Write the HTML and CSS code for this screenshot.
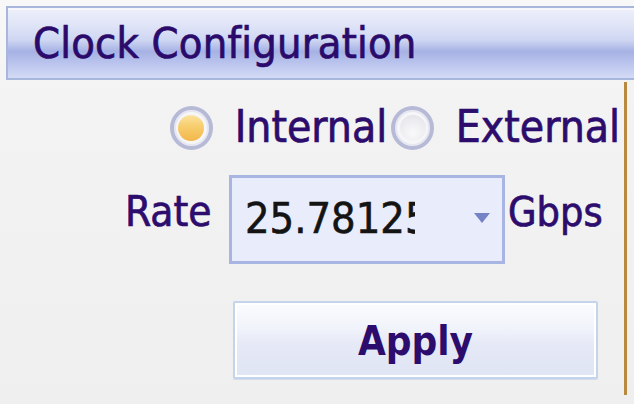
FILE: index.html
```html
<!DOCTYPE html>
<html>
<head>
<meta charset="utf-8">
<link rel="stylesheet" href="styles.css">
</head>
<body>
<div class="window">
  <div class="header"><span class="title">Clock Configuration</span></div>
  <div class="content">
    <div class="row radios">
      <span class="radio checked"><span class="dot"></span></span>
      <span class="label radio-label">Internal</span>
      <span class="radio"><span class="dot"></span></span>
      <span class="label radio-label">External</span>
    </div>
    <div class="row rate">
      <span class="label rate-label">Rate</span>
      <div class="combo">
        <span class="combo-text">25.78125</span>
        <svg class="combo-arrow" width="16" height="10" viewBox="0 0 16 10"><path d="M0 0 H16 L8 10 Z" fill="#7482c6"/></svg>
      </div>
      <span class="label unit-label">Gbps</span>
    </div>
    <div class="row actions">
      <button class="apply">Apply</button>
    </div>
  </div>
</div>
</body>
</html>
```
FILE: styles.css
```css
html, body {
  margin: 0;
  padding: 0;
}
body {
  width: 634px;
  height: 404px;
  overflow: hidden;
  background: linear-gradient(to bottom, #f8f8f8 0px, #f3f3f3 90px, #efefef 404px);
  font-family: "DejaVu Sans Condensed", "DejaVu Sans", sans-serif;
  font-stretch: condensed;
  color: #2c0c6c;
}
.window {
  display: flex;
  flex-direction: column;
}
.header {
  margin: 6px 0 0 6px;
  height: 70px;
  border: 2px solid #a7b6da;
  border-right: none;
  background: linear-gradient(to bottom, #eef0fa 0%, #dfe4f7 25%, #cfd6f2 46%, #a6b2e4 62%, #b9c3ed 78%, #d4dbf5 100%);
  display: flex;
  align-items: center;
  padding-left: 25px;
  box-shadow: inset 0 2px 0 #f6f7fd;
}
.title {
  font-size: 43px;
  color: #2a0a6a;
  -webkit-text-stroke: 0.7px #2a0a6a;
  letter-spacing: 0.2px;
}
.content {
  width: 624px;
  height: 313px;
  margin-top: 2px;
  border-right: 3px solid #b88a40;
  display: flex;
  flex-direction: column;
}
.row {
  display: flex;
}
.label {
  font-size: 43px;
  line-height: 49px;
  white-space: nowrap;
  -webkit-text-stroke: 0.7px #2c0c6c;
}
.radios {
  margin-top: 23px;
  padding-left: 170px;
  align-items: center;
}
.radio {
  width: 44px;
  height: 44px;
  box-sizing: border-box;
  border-radius: 50%;
  border: 4px solid #b7bad6;
  background: #f6f6f9;
  display: flex;
  align-items: center;
  justify-content: center;
  box-shadow: inset 0 0 0 2px #e6e7f0;
}
.radio .dot {
  width: 26px;
  height: 26px;
  border-radius: 50%;
  background: radial-gradient(circle at 50% 70%, #f9f9fb 0%, #ececf0 60%, #dcdce3 100%);
}
.radio.checked .dot {
  background: linear-gradient(to bottom, #fbe3a2 0%, #f8cf70 40%, #f3b64a 100%);
}
.radio-label {
  font-size: 44px;
  margin-left: 22px;
  margin-right: 4px;
  margin-top: -3px;
}
.rate {
  margin-top: 24px;
  padding-left: 125px;
  align-items: flex-start;
}
.rate-label {
  font-size: 42px;
  margin-top: 12px;
  width: 104px;
}
.unit-label {
  font-size: 41px;
  margin-top: 13px;
  margin-left: 3px;
}
.combo {
  width: 276px;
  height: 89px;
  box-sizing: border-box;
  border: 3px solid #a8b4e1;
  background: #e9edfb;
  display: flex;
  align-items: center;
  padding-left: 13px;
}
.combo-text {
  width: 170px;
  overflow: hidden;
  white-space: nowrap;
  font-size: 43px;
  color: #141414;
  -webkit-text-stroke: 0.6px #141414;
  margin-top: -4px;
}
.combo-arrow {
  margin-left: 59px;
  margin-top: -3px;
}
.actions {
  margin-top: 37px;
  padding-left: 233px;
}
.apply {
  width: 365px;
  height: 78px;
  box-sizing: border-box;
  border: 2px solid #c4d4ea;
  border-radius: 2px;
  background: linear-gradient(to bottom, #fbfcfe 0%, #f1f3fb 35%, #e6e9f6 55%, #dfe5f4 100%);
  box-shadow: inset 0 0 0 2px #ffffff, 0 1px 0 #d2dced;
  font-family: "DejaVu Sans Condensed", "DejaVu Sans", sans-serif;
  font-stretch: condensed;
  font-weight: bold;
  font-size: 40px;
  color: #2c0c6c;
  padding: 0;
  padding-top: 2px;
}
```
